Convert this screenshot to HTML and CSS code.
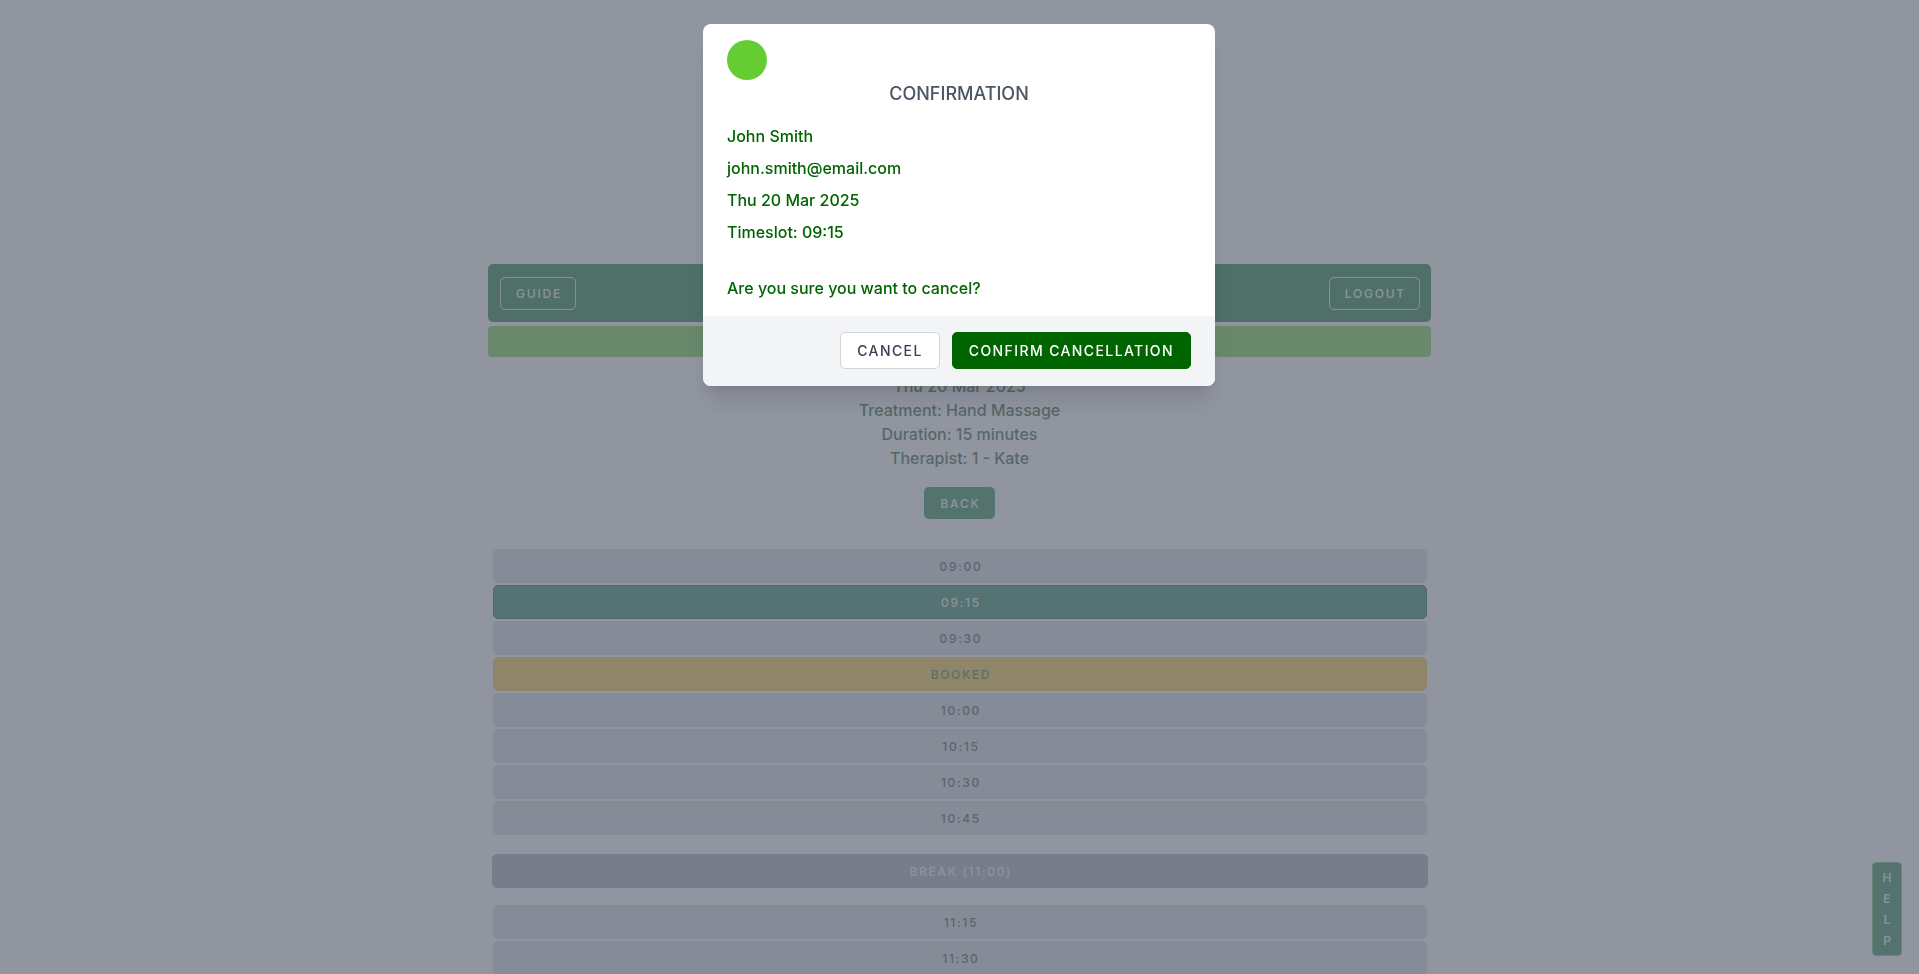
FILE: index.html
```html
<!DOCTYPE html>
<html lang="en">
<head>
    <meta charset="UTF-8">
    <meta name="viewport" content="width=device-width, initial-scale=1.0">
    <title>Booking</title>
    <link rel="stylesheet" href="styles.css">
</head>
<body>
    <div class="page">
        <div class="topbar">
            <button class="outline-btn">Guide</button>
            <button class="outline-btn">Logout</button>
        </div>
        <div class="status-bar"></div>

        <div class="summary">
            <p>Thu 20 Mar 2025</p>
            <p>Treatment: Hand Massage</p>
            <p>Duration: 15 minutes</p>
            <p>Therapist: 1 - Kate</p>
        </div>

        <div class="back-row">
            <button class="back-btn">Back</button>
        </div>

        <div class="slots">
            <div class="slot">09:00</div>
            <div class="slot selected">09:15</div>
            <div class="slot">09:30</div>
            <div class="slot booked">Booked</div>
            <div class="slot">10:00</div>
            <div class="slot">10:15</div>
            <div class="slot">10:30</div>
            <div class="slot">10:45</div>
            <div class="slot break">Break (11:00)</div>
            <div class="slot">11:15</div>
            <div class="slot">11:30</div>
            <div class="slot">11:45</div>
            <div class="slot">12:00</div>
        </div>
    </div>

    <button class="help-btn"><span>H</span><span>E</span><span>L</span><span>P</span></button>

    <div class="overlay">
        <div class="modal">
            <div class="modal-body">
                <div class="modal-icon"></div>
                <h3 class="modal-title">Confirmation</h3>
                <div class="modal-details">
                    <p>John Smith</p>
                    <p>john.smith@email.com</p>
                    <p>Thu 20 Mar 2025</p>
                    <p>Timeslot: 09:15</p>
                </div>
                <p class="modal-question">Are you sure you want to cancel?</p>
            </div>
            <div class="modal-footer">
                <button class="btn btn-cancel">Cancel</button>
                <button class="btn btn-confirm">Confirm Cancellation</button>
            </div>
        </div>
    </div>
</body>
</html>
```

FILE: styles.css
```css
body {
    margin: 0;
    background-color: #fff;
    font-family: Inter, "Liberation Sans", sans-serif;
    color: #006400;
}
button {
    font-family: inherit;
    cursor: pointer;
}
.page {
    width: 943px;
    margin: 0 auto;
    padding-top: 264px;
}
.topbar {
    display: flex;
    justify-content: space-between;
    align-items: center;
    height: 58px;
    padding: 0 11px 0 12px;
    box-sizing: border-box;
    background-color: #026a1c;
    border-radius: 5px;
}
.outline-btn {
    height: 33px;
    padding: 0 13px 0 15px;
    background: transparent;
    border: 1px solid #e5ece8;
    border-radius: 5px;
    color: #f0f4f1;
    font-size: 12px;
    font-weight: 500;
    letter-spacing: 0.15em;
    text-transform: uppercase;
}
.status-bar {
    height: 31px;
    margin-top: 4px;
    background-color: #66cc33;
    border-radius: 4px;
}
.summary {
    margin-top: 17px;
    text-align: center;
    font-size: 16px;
    line-height: 24px;
    font-weight: 500;
    color: #124a20;
}
.summary p {
    margin: 0;
}
.back-row {
    display: flex;
    justify-content: center;
    margin-top: 17px;
}
.back-btn {
    height: 32px;
    padding: 0 14px 0 16px;
    background-color: #137a3e;
    border: none;
    border-radius: 5px;
    color: #eef8f1;
    font-size: 12px;
    font-weight: 500;
    letter-spacing: 0.15em;
    text-transform: uppercase;
}
.slots {
    display: flex;
    flex-direction: column;
    gap: 2px;
    margin-top: 30px;
    padding: 0 4px 0 5px;
}
.slot {
    height: 34px;
    display: flex;
    align-items: center;
    justify-content: center;
    padding-left: 0.15em;
    box-sizing: border-box;
    background-color: #d1d5db;
    border: 1px solid #cfd3d9;
    border-radius: 5px;
    color: #2c3a38;
    font-size: 12px;
    font-weight: 500;
    letter-spacing: 0.14em;
    text-transform: uppercase;
}
.slot.selected {
    background-color: #137a48;
    border-color: #0a4a30;
    color: #e6f7ec;
}
.slot.booked {
    background-color: #fbbf24;
    border-color: #fbbf24;
    color: #2f6a12;
}
.slot.break {
    margin: 17px -1px 15px;
    background-color: #9aa0ad;
    border-color: #9aa0ad;
    color: #f2f3f5;
}
.help-btn {
    position: fixed;
    right: 17px;
    bottom: 18px;
    width: 30px;
    height: 94px;
    display: flex;
    flex-direction: column;
    align-items: center;
    justify-content: center;
    gap: 7px;
    padding: 0;
    background-color: #127a3a;
    border: 1px solid #5cc05a;
    border-radius: 4px;
    color: #e9ecef;
    font-size: 12px;
    font-weight: 600;
    line-height: 14px;
}
.overlay {
    position: fixed;
    inset: 0;
    display: flex;
    justify-content: center;
    align-items: flex-start;
    padding-top: 24px;
    background-color: rgba(107, 114, 128, 0.75);
}
.modal {
    width: 512px;
    margin-left: -1px;
    background-color: #fff;
    border-radius: 8px;
    overflow: hidden;
    box-shadow: 0 20px 25px -5px rgba(0, 0, 0, 0.1), 0 8px 10px -6px rgba(0, 0, 0, 0.1);
}
.modal-body {
    padding: 16px 24px 16px;
}
.modal-icon {
    width: 40px;
    height: 40px;
    border-radius: 50%;
    background-color: #66cc33;
}
.modal-title {
    margin: 0;
    text-align: center;
    font-size: 18px;
    line-height: 28px;
    font-weight: 500;
    color: #4b5563;
    text-transform: uppercase;
}
.modal-details {
    display: flex;
    flex-direction: column;
    gap: 8px;
    margin-top: 16px;
}
.modal-details p,
.modal-question {
    margin: 0;
    font-size: 16px;
    line-height: 24px;
    font-weight: 500;
    color: #006400;
}
.modal-question {
    margin-top: 32px;
}
.modal-footer {
    display: flex;
    justify-content: flex-end;
    gap: 12px;
    padding: 16px 24px 17px;
    background-color: #f3f4f6;
}
.btn {
    height: 37px;
    padding: 0 16px;
    border-radius: 5px;
    font-size: 14px;
    font-weight: 500;
    letter-spacing: 0.1em;
    text-transform: uppercase;
}
.btn-cancel {
    background-color: #fff;
    border: 1px solid #d1d5db;
    color: #374151;
}
.btn-confirm {
    background-color: #006400;
    border: 1px solid #006400;
    color: #fff;
}
```
